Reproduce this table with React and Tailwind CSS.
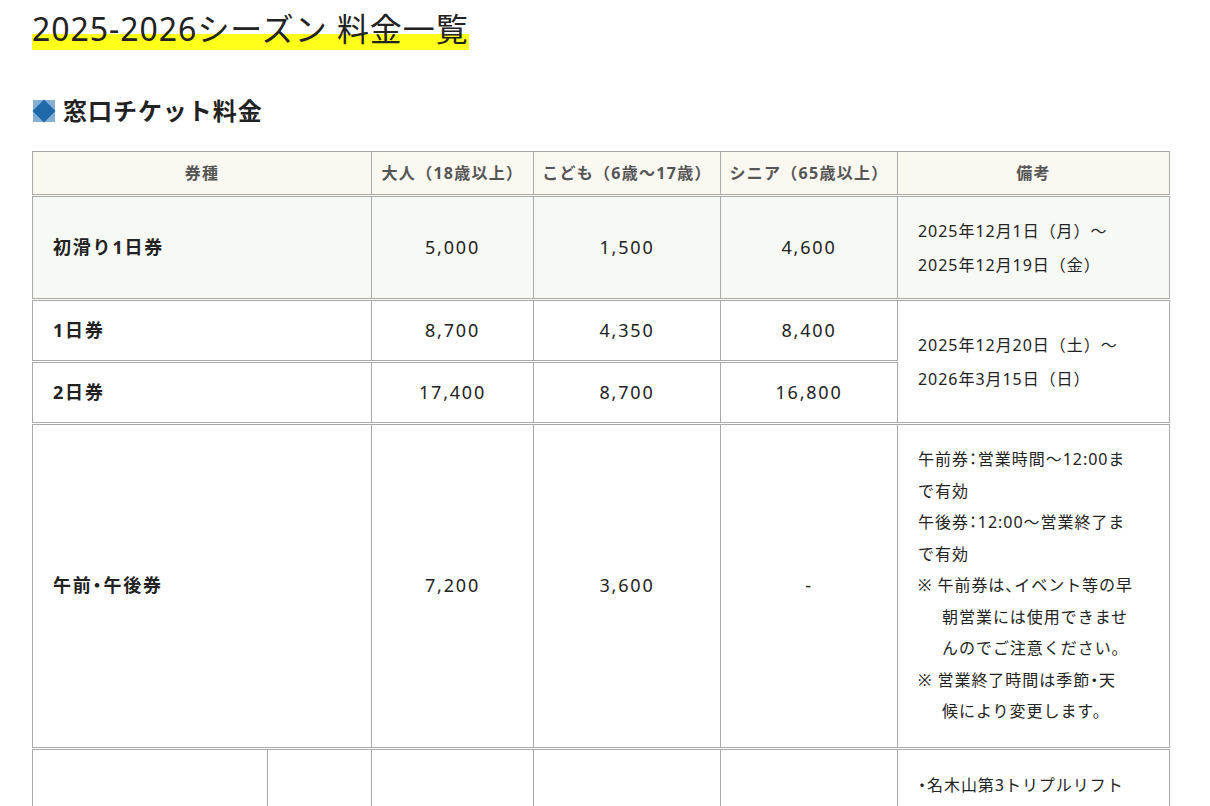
import React from "react";

const bd = "border border-[#aaaaaa]";
const bodyCell = "border border-[#aaaaaa] border-y-[3px] [border-top-style:double] [border-bottom-style:double]";

function Diamond() {
  return (
    <svg width="24" height="24" viewBox="0 0 24 24" className="shrink-0">
      <rect x="1" y="1" width="22" height="22" fill="#84aed4" />
      <polygon points="12,0.5 23.5,12 12,23.5 0.5,12" fill="#1f69a8" />
    </svg>
  );
}

function P({ children }) {
  return <span className="[font-feature-settings:'palt']">{children}</span>;
}

function Note({ children }) {
  return <div className="pl-[24px] -indent-[24px]">{children}</div>;
}

export default function App() {
  const label = "text-left pl-[20px] font-bold text-[18px] tracking-[0.1em] text-[#222]";
  const num = "text-center text-[18px] tracking-[0.1em] text-[#222]";
  const note = "text-left pl-[20px] pr-[8px] text-[16px] tracking-[0.06em] text-[#222] whitespace-nowrap";
  return (
    <div className="min-h-screen bg-white font-['Noto_Sans','Noto_Sans_CJK_JP',sans-serif] text-[#222]">
      <div className="pl-[32px] pr-[41px]">
        <h1 className="pt-[6px] text-[32px] leading-[45px] font-normal tracking-[0.03em] text-[#222]">
          <span className="bg-[linear-gradient(transparent_62%,#ffff1a_62%)]">2025-2026シーズン 料金一覧</span>
        </h1>
        <h2 className="mt-[44px] flex items-center gap-[7px] text-[24px] leading-[32px] font-bold tracking-[0.04em] text-[#222]">
          <Diamond />
          <span>窓口チケット料金</span>
        </h2>
        <table className="mt-[24px] w-[1137px] table-fixed border-collapse">
          <colgroup>
            <col className="w-[235px]" />
            <col className="w-[104px]" />
            <col className="w-[162px]" />
            <col className="w-[187px]" />
            <col className="w-[177px]" />
            <col className="w-[272px]" />
          </colgroup>
          <thead>
            <tr className="h-[44px] bg-[#faf8f1] text-[16px] tracking-[0.08em] font-bold text-[#555]">
              <th colSpan={2} className={bd + " font-bold"}>券種</th>
              <th className={bd + " font-bold whitespace-nowrap"}>大人（18歳以上）</th>
              <th className={bd + " font-bold whitespace-nowrap"}>こども（6歳～17歳）</th>
              <th className={bd + " font-bold whitespace-nowrap"}>シニア（65歳以上）</th>
              <th className={bd + " font-bold"}>備考</th>
            </tr>
          </thead>
          <tbody>
            <tr className="h-[104px] bg-[#f7f9f4]">
              <td colSpan={2} className={bodyCell + " " + label}>初滑り1日券</td>
              <td className={bodyCell + " " + num}>5,000</td>
              <td className={bodyCell + " " + num}>1,500</td>
              <td className={bodyCell + " " + num}>4,600</td>
              <td className={bodyCell + " " + note + " leading-[34px]"}>
                <div>2025年12月1日（月）～</div>
                <div>2025年12月19日（金）</div>
              </td>
            </tr>
            <tr className="h-[62px]">
              <td colSpan={2} className={bodyCell + " " + label}>1日券</td>
              <td className={bodyCell + " " + num}>8,700</td>
              <td className={bodyCell + " " + num}>4,350</td>
              <td className={bodyCell + " " + num}>8,400</td>
              <td rowSpan={2} className={bodyCell + " " + note + " leading-[34px]"}>
                <div>2025年12月20日（土）～</div>
                <div>2026年3月15日（日）</div>
              </td>
            </tr>
            <tr className="h-[62px]">
              <td colSpan={2} className={bodyCell + " " + label}>2日券</td>
              <td className={bodyCell + " " + num}>17,400</td>
              <td className={bodyCell + " " + num}>8,700</td>
              <td className={bodyCell + " " + num}>16,800</td>
            </tr>
            <tr className="h-[322px]">
              <td colSpan={2} className={bodyCell + " " + label}>午前<P>・</P>午後券</td>
              <td className={bodyCell + " " + num}>7,200</td>
              <td className={bodyCell + " " + num}>3,600</td>
              <td className={bodyCell + " " + num}>-</td>
              <td className={bodyCell + " " + note + " leading-[31.5px] py-[19px]"}>
                <div>午前券<P>：</P>営業時間～12:00ま</div>
                <div>で有効</div>
                <div>午後券<P>：</P>12:00～営業終了ま</div>
                <div>で有効</div>
                <Note>※ 午前券は<P>、</P>イベント等の早<br />朝営業には使用できませ<br />んのでご注意ください。</Note>
                <Note>※ 営業終了時間は季節<P>・</P>天<br />候により変更します。</Note>
              </td>
            </tr>
            <tr className="h-[120px]">
              <td className={bodyCell}></td>
              <td className={bodyCell}></td>
              <td className={bodyCell}></td>
              <td className={bodyCell}></td>
              <td className={bodyCell}></td>
              <td className={bodyCell + " " + note + " leading-[31.5px] align-top pt-[20px]"}>
                <div><P>・</P>名木山第3トリプルリフト</div>
              </td>
            </tr>
          </tbody>
        </table>
      </div>
    </div>
  );
}
